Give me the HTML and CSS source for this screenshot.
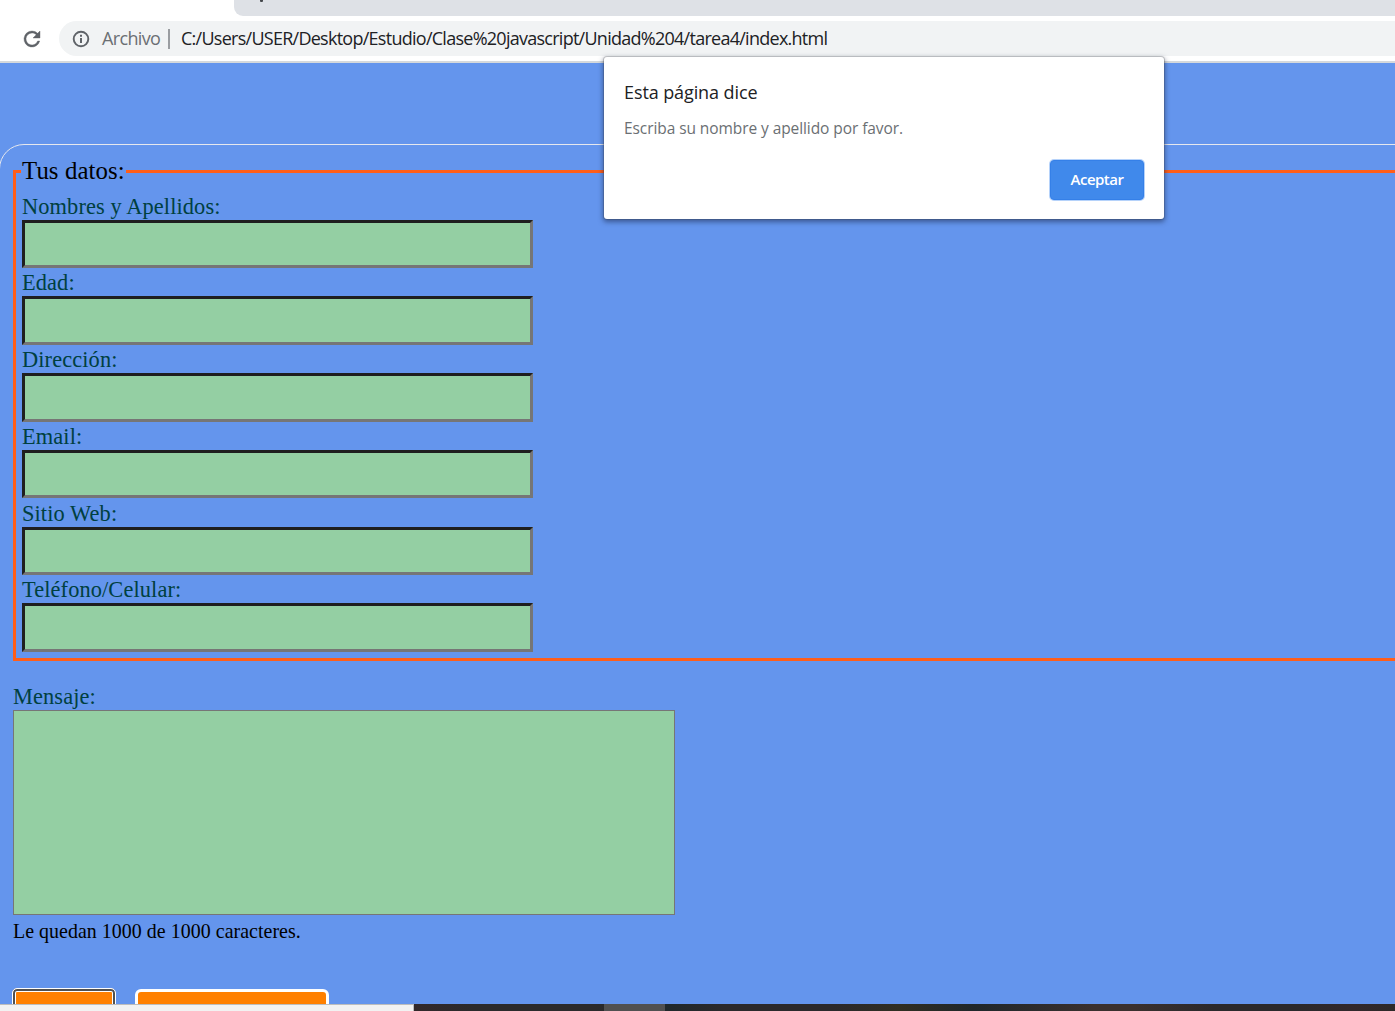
FILE: index.html
```
<!DOCTYPE html>
<html lang="es">
<head>
<meta charset="utf-8">
<title>Formulario</title>
<link rel="stylesheet" href="styles.css">
</head>
<body>
<div class="browser">
  <div class="tabstrip"><div class="tab-rest"><span class="tab-mark"></span></div></div>
  <div class="toolbar">
    <svg class="reload" width="24" height="24" viewBox="0 0 24 24"><path fill="#5f6368" stroke="#5f6368" stroke-width=".4" d="M17.65 6.35A7.96 7.96 0 0 0 12 4a8 8 0 1 0 7.73 10h-2.08A6 6 0 1 1 12 6c1.66 0 3.14.69 4.22 1.78L13 11h7V4z"/></svg>
    <div class="omnibox">
      <svg class="info" width="18" height="18" viewBox="0 0 18 18"><circle cx="9" cy="9" r="7.3" fill="none" stroke="#5f6368" stroke-width="1.9"/><path d="M8 4.8h2v2H8zM8 8h2v5H8z" fill="#5f6368"/></svg>
      <span class="scheme">Archivo</span><span class="divider"></span>
      <span class="url">C:/Users/USER/Desktop/Estudio/Clase%20javascript/Unidad%204/tarea4/index.html</span>
    </div>
  </div>
  <main class="page">
    <form class="contact">
      <fieldset class="data">
        <legend class="legend">Tus datos:</legend>
        <label class="field">Nombres y Apellidos:<input class="input" type="text"></label>
        <label class="field">Edad:<input class="input" type="text"></label>
        <label class="field">Dirección:<input class="input" type="text"></label>
        <label class="field">Email:<input class="input" type="text"></label>
        <label class="field">Sitio Web:<input class="input" type="text"></label>
        <label class="field">Teléfono/Celular:<input class="input" type="text"></label>
      </fieldset>
      <label class="message">Mensaje:<textarea class="textarea"></textarea></label>
      <p class="counter">Le quedan 1000 de 1000 caracteres.</p>
      <div class="actions">
        <button class="btn btn-focus" type="button"></button>
        <button class="btn btn-reset" type="button"></button>
      </div>
    </form>
  </main>
  <div class="bottom"><div class="status"></div><div class="taskbar"><span class="task"></span></div></div>
  <div class="dialog" role="alertdialog">
    <div class="dialog-title"><span>Esta página dice</span></div>
    <div class="dialog-text"><span>Escriba su nombre y apellido por favor.</span></div>
    <button class="accept" type="button"><span>Aceptar</span></button>
  </div>
</div>
</body>
</html>
```
FILE: styles.css
```
* { box-sizing: border-box; }
body { margin: 0; overflow: hidden; font-family: "Liberation Serif", serif; }
.browser { position: relative; width: 1395px; height: 1011px; display: flex; flex-direction: column; overflow: hidden; background: #fff; }
.tabstrip { height: 16px; flex: none; display: flex; padding-left: 234px; }
.tab-rest { flex: 1; background: #dee1e6; border-bottom-left-radius: 9px; padding-left: 26px; }
.tab-mark { display: block; width: 3px; height: 2px; background: #45484c; border-radius: 0 0 1px 1px; }
.toolbar { height: 47px; flex: none; display: flex; align-items: flex-start; padding: 5px 0 0 20px; border-bottom: 2px solid #d5d9dc; font-family: "Open Sans", sans-serif; font-size: 18px; }
.reload { margin: 6px 15px 0 0; flex: none; }
.omnibox { flex: 1; height: 35px; display: flex; align-items: center; background: #f1f3f4; border-radius: 18px 0 0 18px; padding-left: 13px; white-space: nowrap; }
.info { margin-right: 12px; }
.scheme { width: 66px; padding-bottom: 2px; color: #6b6f73; letter-spacing: -.65px; }
.divider { width: 2px; height: 20px; background: #9a9da1; margin-right: 11px; }
.url { padding-bottom: 2px; color: #202124; letter-spacing: -.735px; }
.page { flex: 1; min-height: 0; overflow: hidden; background: #6495ed; padding-top: 81px; }
.contact { margin: 0 -30px 0 -1px; height: 1000px; border: 1px solid #e6e8ee; border-radius: 25px; padding: 10px 0 0 13px; }
.data { margin: 0; padding: 0 6px 6px; border: 3px solid #ff5e19; height: 506px; min-width: 0; }
.legend { padding: 0 1px; margin-left: -1px; font-size: 24.8px; letter-spacing: .1px; line-height: 31px; height: 33px; color: #000; }
.field { display: flex; flex-direction: column; height: 76.7px; font-size: 22.4px; letter-spacing: .1px; line-height: 27px; padding-top: 1.75px; color: #004040; }
.legend + .field { margin-top: 3px; }
.input { flex: none; width: 511px; height: 48.4px; padding: 0; border: 3px solid; border-color: #1f1f1f #767676 #767676 #1f1f1f; background: #94cfa3; outline: 0; }
.message { display: flex; flex-direction: column; align-items: flex-start; margin-top: 22px; font-size: 22.4px; letter-spacing: .1px; line-height: 27px; color: #004040; }
.textarea { width: 662px; height: 205px; resize: none; border: 1px solid #767676; background: #94cfa3; }
.counter { margin: 4px 0 0; font-size: 19.9px; letter-spacing: .05px; line-height: 24px; color: #000; }
.actions { display: flex; align-items: flex-start; gap: 19px; margin: 45px 0 0 -1px; }
.btn { background: #ff8000; padding: 0; height: 50px; }
.btn-focus { width: 104px; border: 1px solid #fff; border-radius: 5px; box-shadow: inset 0 0 0 2px #505050, inset 0 0 0 3px #fff; }
.btn-reset { width: 194px; margin-top: 1px; border: 3px solid #fff; border-radius: 6px; }
.bottom { flex: none; height: 7px; display: flex; }
.status { width: 414px; background: #f2f2f2; border-top: 1px solid #bdbdbd; border-right: 1px solid #bdbdbd; }
.taskbar { flex: 1; display: flex; padding-left: 190px; background: linear-gradient(90deg, #32282a 0, #2b2a2b 60px, #2b2a2b 180px, #20282b 255px, #2b292b 310px, #2b292b 420px, #302e22 485px, #20272a 560px, #3a302e 680px, #3a302e 720px, #2b292b 800px, #2b292b 880px, #32282b 940px, #2d2928); }
.task { width: 61px; background: #505050; }
.dialog { position: absolute; left: 604px; top: 57px; width: 560px; height: 162px; display: flex; flex-direction: column; padding: 22px 20px 19px; background: #fff; border-radius: 3px; box-shadow: 0 0 0 1px rgba(60,64,67,.22), 0 2px 5px 1px rgba(20,30,60,.5); font-family: "Open Sans", sans-serif; white-space: nowrap; }
.dialog-title { height: 27px; line-height: 27px; font-size: 18px; color: #202124; letter-spacing: -.1px; }
.dialog-text { margin-top: 10px; height: 24px; line-height: 24px; font-size: 15.5px; letter-spacing: -.08px; color: #6b6f73; }
.accept { align-self: flex-end; margin-top: 20px; flex: none; width: 94px; height: 40px; padding: 0 0 2px; border: 1px solid #3580e8; border-radius: 4px; background: #4089eb; box-shadow: 0 0 0 1px #b5d2fa; color: #fff; font: 600 15px "Open Sans", sans-serif; letter-spacing: -.5px; }
```
